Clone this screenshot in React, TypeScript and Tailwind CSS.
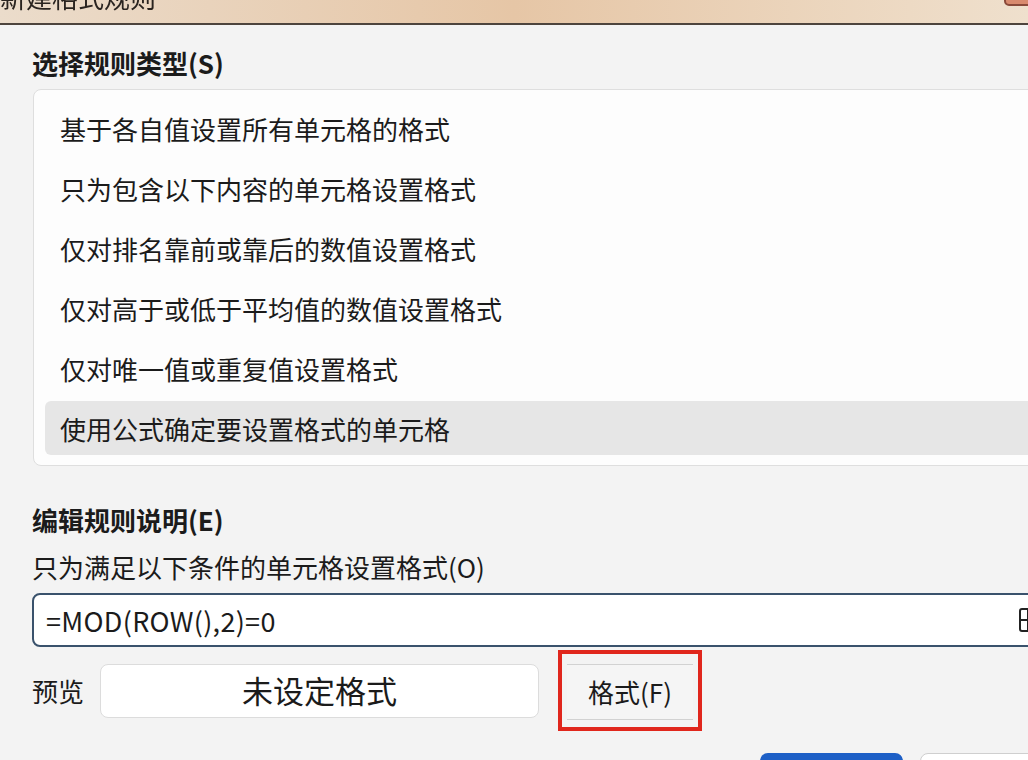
const items = [
  '基于各自值设置所有单元格的格式',
  '只为包含以下内容的单元格设置格式',
  '仅对排名靠前或靠后的数值设置格式',
  '仅对高于或低于平均值的数值设置格式',
  '仅对唯一值或重复值设置格式',
  '使用公式确定要设置格式的单元格',
];

export default function App() {
  const selected = 5;

  return (
    <div
      className="w-[1028px] h-[760px] overflow-hidden bg-[#f3f3f3] text-[#1b1b1b]"
      style={{ fontFamily: '"Noto Sans CJK SC", "Noto Sans", sans-serif' }}
    >
      {/* title bar, mostly cut off */}
      <div className="h-[25px] overflow-hidden flex justify-between bg-gradient-to-r from-[#ebdccb] via-[#e6c6a6] to-[#efe0cd] border-b-2 border-[#4d443d]">
        <div className="-mt-[20px] pl-0 text-[26px] leading-[34px] text-[#2a2420] blur-[0.4px]">新建格式规则</div>
        <div className="-mt-[10px] mr-[-6px] w-[30px] h-[16px] rounded-[5px] border-2 border-[#8a4a3a] bg-[#d98a6e]" />
      </div>

      <div className="w-[1100px] pl-8 flex flex-col">
        <h2 className="mt-[21px] text-[26px] leading-[34px] font-bold">选择规则类型(S)</h2>

        <div className="mt-[9px] ml-px bg-[#fdfdfd] border border-[#dedede] rounded-[8px] pl-[11px] pt-[11px] pb-[10px] flex flex-col gap-[6px]">
          {items.map((text, i) => (
            <div
              key={i}
              className={
                'h-[54px] flex items-center pl-[15px] rounded-[6px] text-[26px] ' +
                (i === selected ? 'bg-[#e6e6e6]' : '')
              }
            >
              {text}
            </div>
          ))}
        </div>

        <h2 className="mt-[37px] text-[26px] leading-[34px] font-bold">编辑规则说明(E)</h2>
        <div className="mt-[13px] text-[26px] leading-[34px]">只为满足以下条件的单元格设置格式(O)</div>

        <div className="mt-[9px] h-[54px] bg-white border-2 border-[#3a526c] rounded-[8px] flex items-center justify-between pl-[12px] pr-[60px]">
          <span className="text-[27px] leading-none tracking-[0.3px]">=MOD(ROW(),2)=0</span>
          <svg width="20" height="26" viewBox="0 0 20 26" fill="none" stroke="#222" strokeWidth="2">
            <rect x="2" y="2" width="16" height="22" rx="2" />
            <path d="M2 13h16M10 2v22" />
          </svg>
        </div>

        <div className="mt-[3px] flex items-center">
          <span className="w-[52px] text-[26px] leading-[34px]">预览</span>
          <div className="ml-[16px] w-[439px] h-[54px] bg-white border border-[#dcdcdc] rounded-[8px] flex items-center justify-center text-[31px]">
            未设定格式
          </div>
          <div className="ml-[19px] w-[144px] h-[81px] border-4 border-[#e0261c] flex items-center justify-center">
            <div className="w-[126px] h-[56px] mt-[2px] bg-[#f5f5f5] border-y border-[#d2d2d2] flex items-center justify-center text-[26px]">
              格式(F)
            </div>
          </div>
        </div>

        <div className="mt-[22px] flex pl-[728px] gap-[17px]">
          <div className="w-[143px] h-[40px] rounded-[8px] bg-[#1d5fc6]" />
          <div className="w-[143px] h-[40px] rounded-[8px] bg-white border border-[#cfcfcf]" />
        </div>
      </div>
    </div>
  );
}
